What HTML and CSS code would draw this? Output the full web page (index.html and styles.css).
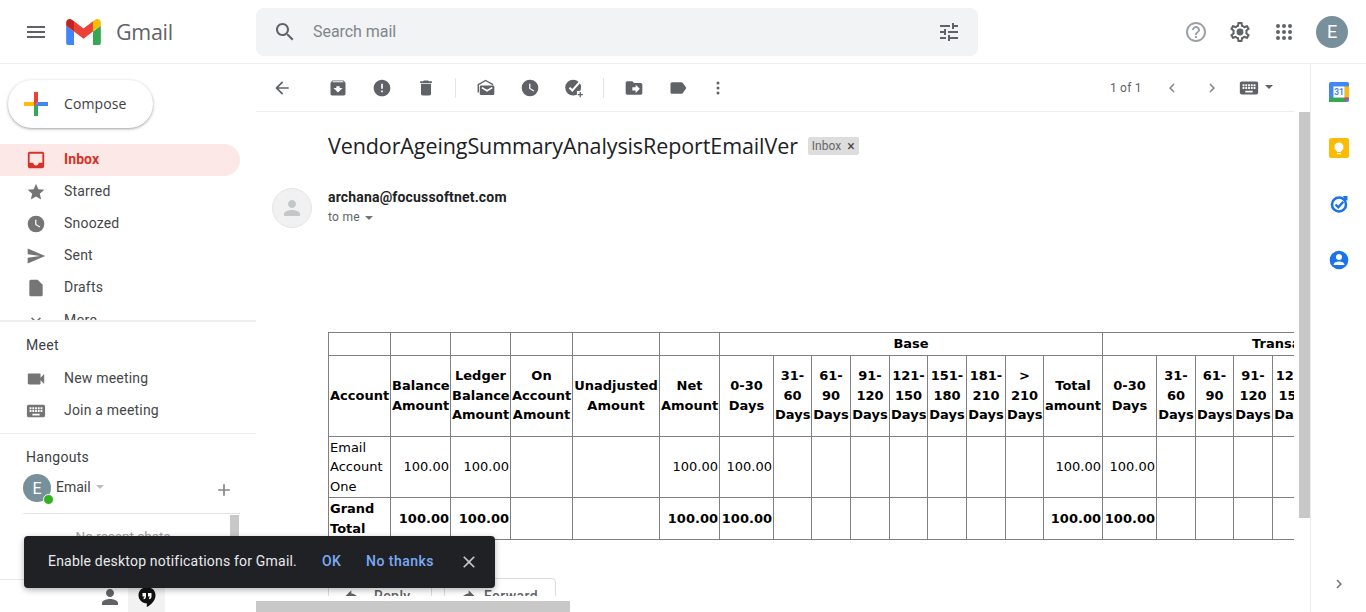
FILE: index.html
```html
<!DOCTYPE html>
<html lang="en">
<head>
<meta charset="utf-8">
<title>Gmail</title>
<link rel="stylesheet" href="styles.css">
</head>
<body>
<div class="page">
  <header class="topbar">
    <div class="brand">
      <svg class="ico menu" viewBox="0 0 24 24"><path d="M3 18h18v-2H3v2zm0-5h18v-2H3v2zm0-7v2h18V6H3z"/></svg>
      <svg class="logo" viewBox="52 42 88 66"><path fill="#4285f4" d="M58 108h14V74L52 59v43c0 3.32 2.69 6 6 6"/><path fill="#34a853" d="M120 108h14c3.32 0 6-2.69 6-6V59l-20 15"/><path fill="#fbbc04" d="M120 48v26l20-15v-8c0-7.42-8.47-11.65-14.4-7.2"/><path fill="#ea4335" d="M72 74V48l24 18 24-18v26L96 92"/><path fill="#c5221f" d="M52 51v8l20 15V48l-5.6-4.2c-5.94-4.45-14.4-.22-14.4 7.2"/></svg>
      <span class="wordmark">Gmail</span>
    </div>
    <div class="search">
      <svg class="ico" viewBox="0 0 24 24"><path d="M15.5 14h-.79l-.28-.27C15.41 12.59 16 11.11 16 9.5 16 5.91 13.09 3 9.5 3S3 5.91 3 9.5 5.91 16 9.5 16c1.61 0 3.09-.59 4.23-1.57l.27.28v.79l5 4.99L20.49 19l-4.99-5zm-6 0C7.01 14 5 11.99 5 9.5S7.01 5 9.5 5 14 7.01 14 9.5 11.99 14 9.5 14z"/></svg>
      <span class="search-text">Search mail</span>
      <svg class="ico" viewBox="0 0 24 24"><path d="M3 17v2h6v-2H3zM3 5v2h10V5H3zm10 16v-2h8v-2h-8v-2h-2v6h2zM7 9v2H3v2h4v2h2V9H7zm14 4v-2H11v2h10zm-6-4h2V7h4V5h-4V3h-2v6z"/></svg>
    </div>
    <div class="account">
      <svg class="ico help" viewBox="0 0 24 24"><path d="M11 18h2v-2h-2v2zm1-16C6.48 2 2 6.48 2 12s4.48 10 10 10 10-4.48 10-10S17.52 2 12 2zm0 18c-4.41 0-8-3.59-8-8s3.59-8 8-8 8 3.59 8 8-3.59 8-8 8zm0-14c-2.21 0-4 1.79-4 4h2c0-1.1.9-2 2-2s2 .9 2 2c0 2-3 1.75-3 5h2c0-2.25 3-2.5 3-5 0-2.21-1.79-4-4-4z"/></svg>
      <svg class="ico gear" viewBox="0 0 24 24"><path d="M19.43 12.98c.04-.32.07-.64.07-.98 0-.34-.03-.66-.07-.98l2.11-1.65c.19-.15.24-.42.12-.64l-2-3.46c-.09-.16-.26-.25-.44-.25-.06 0-.12.01-.17.03l-2.49 1c-.52-.4-1.08-.73-1.69-.98l-.38-2.65C14.46 2.18 14.25 2 14 2h-4c-.25 0-.46.18-.49.42l-.38 2.65c-.61.25-1.17.59-1.69.98l-2.49-1c-.06-.02-.12-.03-.18-.03-.17 0-.34.09-.43.25l-2 3.46c-.13.22-.07.49.12.64l2.11 1.65c-.04.32-.07.65-.07.98 0 .33.03.66.07.98l-2.11 1.65c-.19.15-.24.42-.12.64l2 3.46c.09.16.26.25.44.25.06 0 .12-.01.17-.03l2.49-1c.52.4 1.08.73 1.69.98l.38 2.65c.03.24.24.42.49.42h4c.25 0 .46-.18.49-.42l.38-2.65c.61-.25 1.17-.59 1.69-.98l2.49 1c.06.02.12.03.18.03.17 0 .34-.09.43-.25l2-3.46c.12-.22.07-.49-.12-.64l-2.11-1.65zm-1.98-1.71c.04.31.05.52.05.73 0 .21-.02.43-.05.73l-.14 1.13.89.7 1.08.84-.7 1.21-1.27-.51-1.04-.42-.9.68c-.43.32-.84.56-1.25.73l-1.06.43-.16 1.13-.2 1.35h-1.4l-.19-1.35-.16-1.13-1.06-.43c-.43-.18-.83-.41-1.23-.71l-.91-.7-1.06.43-1.27.51-.7-1.21 1.08-.84.89-.7-.14-1.13c-.03-.31-.05-.54-.05-.74s.02-.43.05-.73l.14-1.13-.89-.7-1.08-.84.7-1.21 1.27.51 1.04.42.9-.68c.43-.32.84-.56 1.25-.73l1.06-.43.16-1.13.2-1.35h1.39l.19 1.35.16 1.13 1.06.43c.43.18.83.41 1.23.71l.91.7 1.06-.43 1.27-.51.7 1.21-1.07.85-.89.7.14 1.13z"/><circle cx="12" cy="12" r="3.4"/></svg>
      <svg class="ico" viewBox="0 0 24 24"><circle cx="6" cy="6" r="2"/><circle cx="12" cy="6" r="2"/><circle cx="18" cy="6" r="2"/><circle cx="6" cy="12" r="2"/><circle cx="12" cy="12" r="2"/><circle cx="18" cy="12" r="2"/><circle cx="6" cy="18" r="2"/><circle cx="12" cy="18" r="2"/><circle cx="18" cy="18" r="2"/></svg>
      <span class="avatar">E</span>
    </div>
  </header>

  <div class="workspace">
    <aside class="nav">
      <div class="labels">
        <div class="compose">
          <svg class="compose-plus" viewBox="0 0 36 36"><path fill="#34A853" d="M16 16v14h4V20z"/><path fill="#4285F4" d="M30 16H20l-4 4h14z"/><path fill="#FBBC05" d="M6 16v4h10l4-4z"/><path fill="#EA4335" d="M20 16V6h-4v14z"/></svg>
          <span>Compose</span>
        </div>
        <div class="item active"><svg class="ico" viewBox="1 1 22 22"><path d="M19 3H5a2 2 0 0 0-2 2v14c0 1.1.9 2 2 2h14a2 2 0 0 0 2-2V5a2 2 0 0 0-2-2zm0 12h-4c0 1.66-1.35 3-3 3s-3-1.34-3-3H5V5h14v10z"/></svg><span>Inbox</span></div>
        <div class="item"><svg class="ico" viewBox="0 0 24 24"><path d="M12 17.27L18.18 21l-1.64-7.03L22 9.24l-7.19-.61L12 2 9.19 8.63 2 9.24l5.46 4.73L5.82 21z"/></svg><span>Starred</span></div>
        <div class="item"><svg class="ico" viewBox="0 0 24 24"><circle cx="12" cy="12" r="10"/><path class="cut" d="M12.5 7H11v6l5.25 3.15.75-1.23-4.5-2.67z"/></svg><span>Snoozed</span></div>
        <div class="item"><svg class="ico" viewBox="0 0 24 24"><path d="M2.01 21L23 12 2.01 3 2 10l15 2-15 2z"/></svg><span>Sent</span></div>
        <div class="item"><svg class="ico" viewBox="0 0 24 24"><path d="M14 2H6c-1.1 0-1.99.9-1.99 2L4 20c0 1.1.89 2 1.99 2H18c1.1 0 2-.9 2-2V8l-6-6z"/></svg><span>Drafts</span></div>
        <div class="item more-item"><svg class="ico" viewBox="0 0 24 24"><path d="M16.59 8.59L12 13.17 7.41 8.59 6 10l6 6 6-6z"/></svg><span>More</span></div>
      </div>
      <section class="meet">
        <h3 class="nav-head">Meet</h3>
        <div class="item"><svg class="ico" viewBox="1 1 22 22"><path d="M17 10.5V7c0-.55-.45-1-1-1H4c-.55 0-1 .45-1 1v10c0 .55.45 1 1 1h12c.55 0 1-.45 1-1v-3.5l4 4v-11l-4 4z"/></svg><span>New meeting</span></div>
        <div class="item"><svg class="ico" viewBox="1 1 22 22"><path d="M20 5H4c-1.1 0-1.99.9-1.99 2L2 17c0 1.1.9 2 2 2h16c1.1 0 2-.9 2-2V7c0-1.1-.9-2-2-2zm-9 3h2v2h-2V8zm0 3h2v2h-2v-2zM8 8h2v2H8V8zm0 3h2v2H8v-2zm-1 2H5v-2h2v2zm0-3H5V8h2v2zm9 7H8v-2h8v2zm0-4h-2v-2h2v2zm0-3h-2V8h2v2zm3 3h-2v-2h2v2zm0-3h-2V8h2v2z"/></svg><span>Join a meeting</span></div>
      </section>
      <section class="hangouts">
        <h3 class="nav-head">Hangouts</h3>
        <div class="hang-user">
          <span class="hang-avatar">E<i class="presence"></i></span>
          <span class="hang-name">Email</span>
          <i class="caret hang-caret"></i>
          <svg class="ico hang-add" viewBox="0 0 24 24"><path d="M19 13h-6v6h-2v-6H5v-2h6V5h2v6h6v2z"/></svg>
        </div>
        <div class="chats">
          <span class="no-chats">No recent chats</span>
          <i class="chat-thumb"></i>
        </div>
      </section>
      <div class="nav-foot">
        <div class="foot-tab"><svg class="ico" viewBox="0 0 24 24"><path d="M12 12c2.21 0 4-1.79 4-4s-1.79-4-4-4-4 1.79-4 4 1.79 4 4 4zm0 2c-2.67 0-8 1.34-8 4v2h16v-2c0-2.66-5.33-4-8-4z"/></svg></div>
        <div class="foot-tab on"><svg class="ico bubble" viewBox="0 0 24 24"><path d="M12 2c-4.7 0-8.5 3.6-8.5 8.2 0 4.5 3.8 8.1 8.3 8.1V22c4.4-2.1 8.7-6.6 8.7-11.8C20.500 5.600 16.700 2 12 2z"/><path class="cut" d="M7.500 8h3.500v3.400c0 1.500-1 2.600-2.400 2.800v-1.700c.6-.1.900-.5 1-1.100H7.500zM13 8h3.500v3.400c0 1.500-1 2.600-2.400 2.800v-1.700c.6-.1.900-.5 1-1.100H13z"/></svg></div>
      </div>
    </aside>

    <main class="mail">
      <div class="thread">
        <div class="toolbar">
          <svg class="ico tb back" viewBox="0 0 24 24"><path d="M20 11H7.830l5.590-5.590L12 4l-8 8 8 8 1.410-1.410L7.830 13H20v-2z"/></svg>
          <svg class="ico tb" viewBox="0 0 24 24"><path d="M20.540 5.230l-1.390-1.680C18.880 3.210 18.470 3 18 3H6c-.47 0-.88.21-1.160.55L3.460 5.230C3.170 5.570 3 6.020 3 6.500V19c0 1.100.9 2 2 2h14c1.100 0 2-.9 2-2V6.500c0-.48-.17-.93-.46-1.270zM12 17.500L6.500 12H10v-2h4v2h3.500L12 17.500zM5.120 5l.81-1h12l.94 1H5.120z"/></svg>
          <svg class="ico tb" viewBox="0 0 24 24"><path d="M12 2C6.480 2 2 6.480 2 12s4.480 10 10 10 10-4.480 10-10S17.520 2 12 2zm1 15h-2v-2h2v2zm0-4h-2V7h2v6z"/></svg>
          <svg class="ico tb" viewBox="0 0 24 24"><path d="M6 19c0 1.100.9 2 2 2h8c1.100 0 2-.9 2-2V7H6v12zM19 4h-3.500l-1-1h-5l-1 1H5v2h14V4z"/></svg>
          <i class="tb-sep"></i>
          <svg class="ico tb" viewBox="0 0 24 24"><path d="M6 9h14.500a1.500 1.500 0 0 1 1.500 1.500V19a1.500 1.500 0 0 1-1.500 1.500H6A1.500 1.500 0 0 1 4.500 19v-8.500A1.500 1.500 0 0 1 6 9z"/><path class="cut-line" d="M7 11.500l6.200 3.800 6.300-3.800"/><path class="line" d="M2.700 17.500V8l8.800-5 9 5"/></svg>
          <svg class="ico tb" viewBox="0 0 24 24"><circle cx="12" cy="12" r="10"/><path class="cut" d="M12.500 7H11v6l5.250 3.150.75-1.230-4.500-2.670z"/></svg>
          <svg class="ico tb" viewBox="0 0 24 24"><circle cx="11" cy="11.500" r="9.500"/><path class="cut-line wide" d="M6.500 11.500l3.500 3.500 9.500-11"/><path class="plus-cut" d="M15.500 15.500h8.500v8.500h-8.500z"/><path d="M18.800 16.800h1.500v2.400h2.400v1.500h-2.400v2.400h-1.500v-2.400h-2.400v-1.500h2.400z"/></svg>
          <i class="tb-sep"></i>
          <svg class="ico tb" viewBox="0 0 24 24"><path d="M20 6h-8l-2-2H4c-1.100 0-1.990.9-1.990 2L2 18c0 1.100.9 2 2 2h16c1.100 0 2-.9 2-2V8c0-1.100-.9-2-2-2zm-6 12v-3h-4v-4h4V8l5 5-5 5z"/></svg>
          <svg class="ico tb" viewBox="0 0 24 24"><path d="M17.630 5.840C17.270 5.330 16.670 5 16 5L5 5.010C3.900 5.010 3 5.900 3 7v10c0 1.100.9 1.990 2 1.990L16 19c.67 0 1.270-.33 1.630-.84L22 12l-4.370-6.160z"/></svg>
          <svg class="ico tb more" viewBox="0 0 24 24"><circle cx="12" cy="6" r="1.800"/><circle cx="12" cy="12" r="1.800"/><circle cx="12" cy="18" r="1.800"/></svg>
          <span class="pager">1 of 1</span>
          <svg class="ico nav-arrow" viewBox="0 0 24 24"><path d="M15.410 7.410L14 6l-6 6 6 6 1.410-1.410L10.830 12z"/></svg>
          <svg class="ico nav-arrow" viewBox="0 0 24 24"><path d="M10 6L8.590 7.410 13.170 12l-4.580 4.590L10 18l6-6z"/></svg>
          <svg class="ico kb" viewBox="0 0 24 24"><path d="M20 5H4c-1.100 0-1.990.9-1.990 2L2 17c0 1.100.9 2 2 2h16c1.100 0 2-.9 2-2V7c0-1.100-.9-2-2-2zm-9 3h2v2h-2V8zm0 3h2v2h-2v-2zM8 8h2v2H8V8zm0 3h2v2H8v-2zm-1 2H5v-2h2v2zm0-3H5V8h2v2zm9 7H8v-2h8v2zm0-4h-2v-2h2v2zm0-3h-2V8h2v2zm3 3h-2v-2h2v2zm0-3h-2V8h2v2z"/></svg>
          <i class="caret kb-caret"></i>
        </div>
        <div class="content">
          <div class="subject">
            <h2>VendorAgeingSummaryAnalysisReportEmailVer</h2>
            <span class="tag">Inbox<b>×</b></span>
          </div>
          <div class="sender">
            <span class="sender-pic"><svg viewBox="0 0 24 24"><path d="M12 12c2.210 0 4-1.790 4-4s-1.790-4-4-4-4 1.790-4 4 1.790 4 4 4zm0 2c-2.670 0-8 1.340-8 4v2h16v-2c0-2.660-5.330-4-8-4z"/></svg></span>
            <div class="sender-info">
              <div class="sender-mail">archana@focussoftnet.com</div>
              <div class="sender-to">to me <i class="caret"></i></div>
            </div>
          </div>
          <div class="report">
            <table>
              <colgroup>
                <col class="w62"><col class="w60"><col class="w60"><col class="w62"><col class="w87"><col class="w60">
                <col class="w54"><col class="w38"><col class="w39"><col class="w39"><col class="w38"><col class="w39"><col class="w39"><col class="w38"><col class="w59">
                <col class="w54"><col class="w39"><col class="w38"><col class="w39"><col class="w39"><col class="w39"><col class="w39"><col class="w38"><col class="w59">
              </colgroup>
              <tr>
                <th></th><th></th><th></th><th></th><th></th><th></th>
                <th colspan="9">Base</th>
                <th colspan="9">Transaction</th>
              </tr>
              <tr class="head">
                <th>Account</th><th>Balance Amount</th><th>Ledger Balance Amount</th><th>On Account Amount</th><th>Unadjusted Amount</th><th>Net Amount</th>
                <th>0-30 Days</th><th>31-60 Days</th><th>61-90 Days</th><th>91-120 Days</th><th>121-150 Days</th><th>151-180 Days</th><th>181-210 Days</th><th>&gt; 210 Days</th><th>Total amount</th>
                <th>0-30 Days</th><th>31-60 Days</th><th>61-90 Days</th><th>91-120 Days</th><th>121-150 Days</th><th>151-180 Days</th><th>181-210 Days</th><th>&gt; 210 Days</th><th>Total amount</th>
              </tr>
              <tr>
                <td>Email Account One</td><td class="n">100.00</td><td class="n">100.00</td><td></td><td></td><td class="n">100.00</td>
                <td class="n">100.00</td><td></td><td></td><td></td><td></td><td></td><td></td><td></td><td class="n">100.00</td>
                <td class="n">100.00</td><td></td><td></td><td></td><td></td><td></td><td></td><td></td><td class="n">100.00</td>
              </tr>
              <tr class="total">
                <td>Grand Total</td><td class="n">100.00</td><td class="n">100.00</td><td></td><td></td><td class="n">100.00</td>
                <td class="n">100.00</td><td></td><td></td><td></td><td></td><td></td><td></td><td></td><td class="n">100.00</td>
                <td class="n">100.00</td><td></td><td></td><td></td><td></td><td></td><td></td><td></td><td class="n">100.00</td>
              </tr>
            </table>
          </div>
          <div class="actions">
            <span class="action reply"><svg class="ico" viewBox="0 0 24 24"><path d="M10 9V5l-7 7 7 7v-4.100c5 0 8.500 1.600 11 5.100-1-5-4-10-11-11z"/></svg>Reply</span>
            <span class="action forward"><svg class="ico" viewBox="0 0 24 24"><path d="M14 9V5l7 7-7 7v-4.100c-5 0-8.500 1.600-11 5.100 1-5 4-10 11-11z"/></svg>Forward</span>
          </div>
        </div>
        <div class="hscroll"><i class="hthumb"></i></div>
      </div>
      <div class="vscroll"><i class="vthumb"></i></div>
    </main>

    <aside class="side">
      <div class="side-apps">
        <svg class="side-ico" viewBox="0 0 18 18"><rect width="18" height="18" rx="1.500" fill="#4285f4"/><rect x="14" y="4" width="4" height="10" fill="#fbbc04"/><rect y="14" width="14" height="4" fill="#34a853"/><path d="M14 14h4l-4 4z" fill="#ea4335"/><rect x="4" y="4" width="10" height="10" fill="#fff"/><text class="cal-num" x="9" y="12">31</text></svg>
        <svg class="side-ico" viewBox="0 0 20 20"><rect width="20" height="20" rx="2" fill="#fbbc04"/><circle cx="10" cy="9" r="4.500" fill="#fff"/><rect x="8" y="12" width="4" height="2" fill="#fff"/><rect x="8" y="15" width="4" height="1.200" fill="#fff"/></svg>
        <svg class="side-ico" viewBox="0 0 20 20"><circle cx="10" cy="10.500" r="7" fill="none" stroke="#1a73e8" stroke-width="2.600"/><path d="M6.500 10.500l2.800 2.800 5-5.500" fill="none" stroke="#1a73e8" stroke-width="2.400"/><path d="M14 2l4.500 0 0 4.500-3-.5z" fill="#1a73e8"/></svg>
        <svg class="side-ico" viewBox="0 0 20 20"><circle cx="10" cy="10" r="9.300" fill="#1a73e8"/><circle cx="10" cy="7" r="3" fill="#fff"/><path d="M4.500 15c0-2.500 3.200-3.500 5.500-3.500s5.500 1 5.500 3.500z" fill="#fff"/></svg>
      </div>
      <svg class="ico side-toggle" viewBox="0 0 24 24"><path d="M10 6L8.590 7.410 13.170 12l-4.580 4.590L10 18l6-6z"/></svg>
    </aside>
  </div>

  <div class="toast">
    <span class="toast-msg">Enable desktop notifications for Gmail.</span>
    <span class="toast-ok">OK</span>
    <span class="toast-no">No thanks</span>
    <svg class="toast-x" viewBox="0 0 24 24"><path d="M19 6.410L17.590 5 12 10.590 6.410 5 5 6.410 10.590 12 5 17.590 6.410 19 12 13.410 17.590 19 19 17.590 13.410 12z"/></svg>
  </div>
</div>
</body>
</html>
```
FILE: styles.css
```css
* { box-sizing: border-box; }
html, body { margin: 0; height: 100%; background: #fff; }
body { font-family: Roboto, "Liberation Sans", sans-serif; font-size: 14px; color: #202124; overflow: hidden; }
.page { position: relative; width: 1366px; height: 612px; overflow: hidden; display: flex; flex-direction: column; }
.ico { width: 24px; height: 24px; fill: #5f6368; flex: none; display: block; }
.cut { fill: #fff; }
.line { fill: none; stroke: #5f6368; stroke-width: 1.700; }
.cut-line { fill: none; stroke: #fff; stroke-width: 1.800; }
.cut-line.wide { stroke-width: 2.400; }
.plus-cut { fill: #fff; }
.caret { display: inline-block; width: 0; height: 0; border: 4px solid transparent; border-top: 4px solid #757575; border-bottom: 0; }

/* top bar */
.topbar { height: 64px; flex: none; display: flex; align-items: center; border-bottom: 1px solid #ededed; }
.brand { width: 256px; flex: none; display: flex; align-items: center; padding-left: 24px; }
.logo { width: 35px; height: 26px; margin-left: 18px; flex: none; }
.wordmark { margin-left: 15px; font-family: "Open Sans", Roboto, sans-serif; font-size: 21.500px; color: #5f6368; letter-spacing: -.3px; }
.search { width: 722px; height: 48px; flex: none; background: #f1f3f4; border-radius: 8px; display: flex; align-items: center; padding: 0 17px; }
.search-text { flex: 1; margin-left: 16px; font-size: 16px; color: #80868b; letter-spacing: -.05px; }
.account { flex: 1; display: flex; align-items: center; padding-left: 206px; }
.help { fill: #9aa0a6; margin-right: 20px; }
.gear { margin-right: 20px; fill: #5f6368; }
.avatar { width: 32px; height: 32px; margin-left: 20px; border-radius: 50%; background: #78909c; color: #fff; display: flex; align-items: center; justify-content: center; font-size: 18px; }

.workspace { flex: 1; display: flex; min-height: 0; }

/* left nav */
.nav { width: 256px; flex: none; display: flex; flex-direction: column; }
.labels { height: 258px; flex: none; overflow: hidden; padding-top: 16px; border-bottom: 2px solid #eeeeee; }
.compose { width: 145px; height: 48px; margin: 0 0 16px 8px; border-radius: 24px; display: flex; align-items: center; gap: 16px; padding-left: 10px; background: #fff; box-shadow: 0 1px 2px rgba(60,64,67,.3), 0 1px 3px 1px rgba(60,64,67,.15); font-family: "Open Sans", Roboto, sans-serif; font-size: 14px; font-weight: 500; color: #3c4043; letter-spacing: .1px; }
.compose-plus { width: 36px; height: 36px; flex: none; margin-right: -6px; }
.compose span { padding-bottom: 2px; }
.item { width: 240px; height: 32px; flex: none; display: flex; align-items: center; padding-left: 26px; gap: 18px; color: #444746; letter-spacing: .2px; border-radius: 0 16px 16px 0; }
.item span { padding-bottom: 2px; }
.item.more-item span { padding-bottom: 0; }
.item .ico { width: 20px; height: 20px; fill: #757575; }
.item.active { background: #fce8e6; color: #d93025; font-weight: 700; letter-spacing: .1px; }
.item.active .ico { fill: #d93025; }
.meet { height: 112px; flex: none; border-bottom: 1px solid #eeeeee; }
.nav-head { margin: 0; padding-left: 26px; font-size: 14px; font-weight: 400; color: #3c4043; letter-spacing: .3px; line-height: 20px; }
.meet .nav-head { padding-top: 13px; height: 41px; }
.hangouts { height: 145px; flex: none; padding-top: 13px; overflow: hidden; }
.hang-user { display: flex; align-items: flex-start; padding: 7px 0 0 23px; height: 46px; margin-right: 22px; }
.hang-avatar { position: relative; width: 28px; height: 28px; flex: none; border-radius: 50%; background: #78909c; color: #fff; font-size: 16px; display: flex; align-items: center; justify-content: center; }
.presence { position: absolute; right: -3px; bottom: -3px; width: 11px; height: 11px; border-radius: 50%; background: #34b11e; border: 1px solid #fff; }
.hang-name { margin-left: 5px; font-size: 14px; color: #444; line-height: 26px; }
.hang-caret { margin: 11px 0 0 5px; border-top-color: #bdbdbd; }
.hang-add { width: 20px; height: 20px; margin-left: auto; margin-top: 6px; fill: #80868b; }
.chats { margin: 0 16px 0 23px; height: 66px; border-top: 1px solid #e4e4e4; display: flex; justify-content: center; padding: 14px 17px 0 0; position: relative; color: #9e9e9e; font-size: 13.500px; line-height: 16px; }
.chat-thumb { position: absolute; right: 1px; top: 1px; width: 9px; height: 60px; background: #c8c8c8; }
.nav-foot { flex: 1; display: flex; justify-content: flex-start; padding-left: 91px; border-top: 1px solid #e8e8e8; }
.foot-tab { width: 37px; display: flex; align-items: flex-end; justify-content: center; padding-bottom: 3px; }
.foot-tab .ico { width: 24px; height: 24px; }
.foot-tab.on { background: #f2f2f2; }
.bubble { fill: #111 !important; }

/* mail */
.mail { width: 1054px; flex: none; display: flex; min-height: 0; }
.thread { width: 1038px; flex: none; display: flex; flex-direction: column; min-height: 0; }
.toolbar { height: 48px; flex: none; border-bottom: 1px solid #ededed; display: flex; align-items: center; padding-left: 4px; }
.tb { width: 20px; height: 20px; margin: 0 12px; fill: #5f6368; }
.tb.back { margin-right: 24px; }
.tb-sep { width: 1px; height: 20px; flex: none; background: #e4e4e4; margin: 0 8px 0 7px; }
.tb.more { margin-left: 8px; }
.pager { margin-left: 370px; font-size: 12px; color: #5f6368; letter-spacing: .2px; white-space: nowrap; flex: none; }
.nav-arrow { width: 18px; height: 18px; fill: #80868b; margin-left: 21px; }
.nav-arrow + .nav-arrow { margin-left: 22px; }
.kb { width: 22px; height: 22px; margin-left: 17px; }
.kb-caret { margin-left: 5px; border-top-color: #5f6368; margin-top: -2px; flex: none; }
.content { flex: 1; min-height: 0; overflow: hidden; padding-left: 72px; }
.subject { display: flex; align-items: center; height: 36px; margin-top: 16px; }
.subject h2 { margin: 0; padding-bottom: 2px; font-family: "Open Sans", Roboto, sans-serif; font-size: 21.500px; font-weight: 400; color: #202124; letter-spacing: -.1px; white-space: nowrap; }
.tag { margin-left: 10px; width: 51px; height: 18px; padding-left: 4px; display: flex; justify-content: space-between; background: #dddddd; color: #666; font-size: 12px; line-height: 18px; border-radius: 2px; white-space: nowrap; }
.tag b { font-weight: 400; color: #444; font-size: 14px; margin-right: 4px; }
.sender { display: flex; margin: 24px 0 0 -56px; height: 40px; }
.sender-pic { width: 40px; height: 40px; border-radius: 50%; background: #f1f1f1; border: 1px solid #e6e6e6; display: flex; align-items: center; justify-content: center; flex: none; }
.sender-pic svg { width: 24px; height: 24px; fill: #c4c7c9; }
.sender-info { margin-left: 16px; }
.sender-mail { font-weight: 700; font-size: 14px; line-height: 18px; color: #202124; letter-spacing: .17px; }
.sender-to { margin-top: 3px; font-size: 12px; line-height: 16px; color: #5f6368; letter-spacing: .3px; }
.sender-to .caret { margin-left: 2px; vertical-align: middle; }
.report { margin-top: 104px; width: 966px; overflow: hidden; }
table { table-layout: fixed; width: 1158px; border-collapse: collapse; font-family: "DejaVu Sans", Verdana, sans-serif; font-size: 13px; line-height: 19.500px; color: #000; }
th, td { border: 1px solid #808080; padding: 1px; overflow: hidden; }
th { font-weight: 700; text-align: center; vertical-align: middle; }
td { text-align: left; vertical-align: middle; }
td.n { text-align: right; }
tr.head { height: 81px; }
tr.total td { font-weight: 700; }
col.w38 { width: 38px; } col.w39 { width: 39px; } col.w54 { width: 54px; } col.w59 { width: 59px; }
col.w60 { width: 60px; } col.w62 { width: 62px; } col.w87 { width: 87px; }
.actions { display: flex; gap: 12px; margin-top: 38px; }
.action { height: 36px; border: 1px solid #dadce0; border-radius: 4px; display: flex; align-items: center; color: #5f6368; font-size: 14px; font-weight: 500; letter-spacing: .4px; }
.action .ico { width: 20px; height: 20px; margin-right: 11px; }
.reply { width: 104px; padding-left: 14px; }
.forward { width: 112px; padding-left: 12px; }
.forward .ico { margin-right: 7px; }
.hscroll { height: 11px; flex: none; margin-top: 5px; background: #fff; }
.hthumb { display: block; width: 314px; height: 100%; background: #c8c8c8; }
.vscroll { width: 16px; flex: none; padding: 48px 0 0 5px; }
.vthumb { display: block; width: 11px; height: 406px; background: #c8c8c8; }

/* side */
.side { flex: 1; border-left: 1px solid #ececec; display: flex; flex-direction: column; align-items: center; padding-left: 1px; }
.side-apps { display: flex; flex-direction: column; align-items: center; gap: 36px; padding-top: 18px; flex: 1; }
.side-ico { width: 20px; height: 20px; display: block; }
.cal-num { font-family: Roboto, sans-serif; font-size: 7.500px; font-weight: 700; fill: #4285f4; text-anchor: middle; }
.side-toggle { width: 18px; height: 18px; fill: #70757a; margin-bottom: 19px; }

/* toast */
.toast { position: absolute; left: 24px; top: 536px; width: 471px; height: 52px; background: #202124; border-radius: 4px; box-shadow: 0 2px 6px rgba(0,0,0,.3); display: flex; align-items: center; padding-left: 24px; }
.toast-msg { color: #e8eaed; font-size: 14px; width: 249px; white-space: nowrap; letter-spacing: .2px; padding-bottom: 2px; }
.toast-ok { margin-left: 25px; color: #7baaf7; font-weight: 500; font-size: 14px; letter-spacing: .3px; padding-bottom: 2px; }
.toast-no { margin-left: 25px; color: #7baaf7; font-weight: 500; font-size: 14px; letter-spacing: .45px; padding-bottom: 2px; }
.toast-x { width: 20px; height: 20px; margin-left: 25px; fill: #c4c7c9; }
```
